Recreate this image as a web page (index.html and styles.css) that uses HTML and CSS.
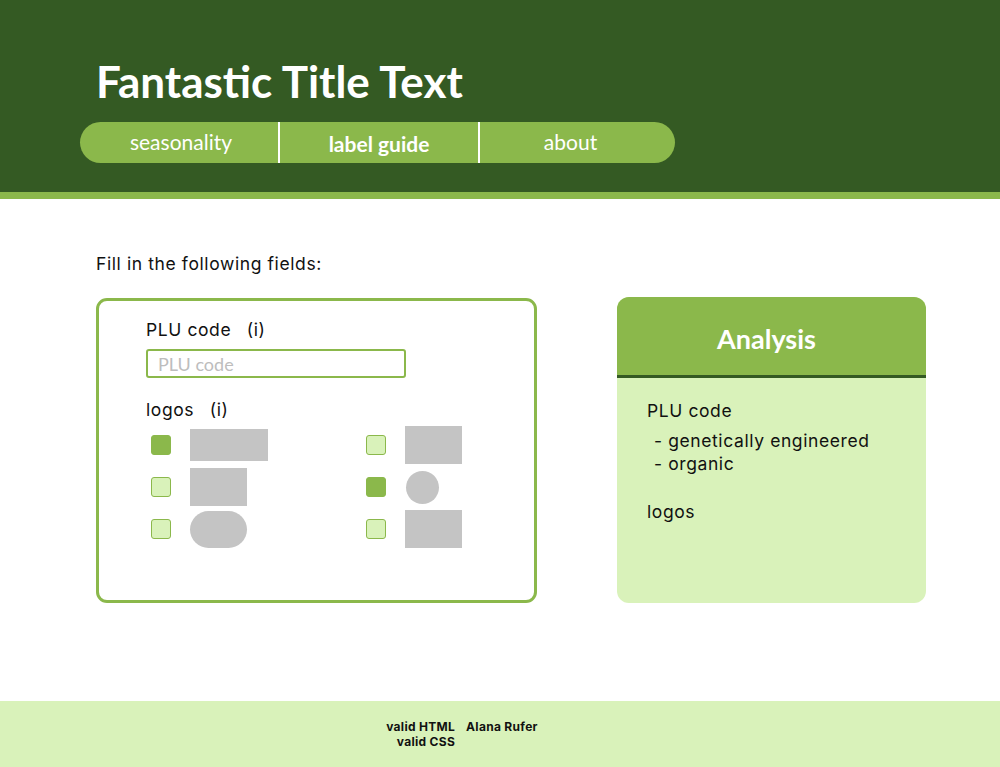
FILE: index.html
```html
<!DOCTYPE html>
<html lang="en">
<head>
<meta charset="utf-8">
<title>Fantastic Title Text</title>
<link rel="stylesheet" href="styles.css">
</head>
<body>
<header class="site-header">
  <h1 class="title">Fantastic Title Text</h1>
  <nav class="nav">
    <a class="nav-item">seasonality</a>
    <a class="nav-item active">label guide</a>
    <a class="nav-item">about</a>
  </nav>
</header>
<main class="main">
  <p class="intro">Fill in the following fields:</p>
  <div class="columns">
    <form class="form-box">
      <label class="field-label">PLU code <span class="info">(i)</span></label>
      <input class="text-input" type="text" placeholder="PLU code">
      <div class="field-label logos-label">logos <span class="info">(i)</span></div>
      <div class="logo-grid">
        <div class="logo-col">
          <div class="logo-row"><span class="check on"></span><span class="shape s-wide"></span></div>
          <div class="logo-row"><span class="check"></span><span class="shape s-sq"></span></div>
          <div class="logo-row"><span class="check"></span><span class="shape s-pill"></span></div>
        </div>
        <div class="logo-col right">
          <div class="logo-row"><span class="check"></span><span class="shape s-sq2"></span></div>
          <div class="logo-row"><span class="check on"></span><span class="shape s-circle"></span></div>
          <div class="logo-row"><span class="check"></span><span class="shape s-sq2"></span></div>
        </div>
      </div>
    </form>
    <section class="analysis">
      <h2 class="analysis-title">Analysis</h2>
      <div class="analysis-body">
        <p class="a-head">PLU code</p>
        <p class="a-item">- genetically engineered</p>
        <p class="a-item">- organic</p>
        <p class="a-head logos-head">logos</p>
      </div>
    </section>
  </div>
</main>
<footer class="footer">
  <div class="foot-left">
    <span>valid HTML</span>
    <span>valid CSS</span>
  </div>
  <div class="foot-right">Alana Rufer</div>
</footer>
</body>
</html>
```
FILE: styles.css
```css
* { box-sizing: border-box; }
html, body { margin: 0; padding: 0; }
body {
  width: 1000px;
  height: 767px;
  background: #ffffff;
  font-family: "Inter", "Noto Sans", sans-serif;
  color: #111;
  display: flex;
  flex-direction: column;
  overflow: hidden;
}
.site-header {
  background: #345a23;
  border-bottom: 7px solid #8bb84b;
  height: 199px;
  padding: 56px 0 0 80px;
}
.title {
  margin: 0 0 0 16px;
  font-family: "Lato", sans-serif;
  font-weight: 700;
  font-size: 44px;
  line-height: 50px;
  color: #ffffff;
}
.nav {
  margin-top: 16px;
  width: 595px;
  height: 41px;
  background: #8bb84b;
  border-radius: 21px;
  display: flex;
}
.nav-item {
  flex: 0 0 auto;
  width: 198px;
  display: flex;
  align-items: center;
  justify-content: center;
  font-family: "Lato", sans-serif;
  font-size: 21px;
  color: #fff;
  padding-bottom: 2px;
}
.nav-item:nth-child(1) { padding-left: 4px; }
.nav-item:nth-child(2) { width: 202px; border-left: 2px solid #fff; border-right: 2px solid #fff; padding-top: 4px; }
.nav-item:nth-child(3) { width: 195px; padding-right: 14px; }
.nav-item.active { font-weight: 700; }
.main {
  flex: 1;
  padding: 54px 0 0 96px;
}
.intro, .field-label, .analysis-body p {
  font-size: 17.5px;
  letter-spacing: 0.6px;
}
.intro {
  margin: 0;
  line-height: 22px;
}
.columns {
  display: flex;
  gap: 81px;
  margin-top: 22px;
}
.form-box {
  width: 441px;
  height: 305px;
  border: 3px solid #8bb84b;
  border-radius: 11px;
  padding: 18px 0 0 47px;
  margin-top: 1px;
}
.field-label {
  display: block;
  line-height: 22px;
}
.info { margin-left: 10px; }
.text-input {
  display: block;
  margin-top: 8px;
  width: 260px;
  height: 29px;
  border: 2px solid #8bb84b;
  border-radius: 3px;
  padding: 0 10px;
  font-family: "Lato", sans-serif;
  font-size: 18px;
  color: #111;
  background: #fff;
}
.text-input::placeholder { color: #bdbdbd; }
.logos-label { margin-top: 21px; }
.logo-grid {
  display: flex;
  margin-top: 3px;
}
.logo-col {
  flex: 0 0 auto;
  width: 215px;
  display: flex;
  flex-direction: column;
}
.logo-row {
  display: flex;
  align-items: center;
  height: 42px;
}
.check {
  width: 20px;
  height: 20px;
  margin-left: 5px;
  border: 1.5px solid #8bb84b;
  border-radius: 3px;
  background: #d9f2ba;
}
.check.on { background: #8bb84b; }
.shape { background: #c4c4c4; margin-left: 19px; }
.s-wide { width: 78px; height: 32px; }
.s-sq { width: 57px; height: 38px; }
.s-pill { width: 57px; height: 37px; border-radius: 19px; }
.s-sq2 { width: 57px; height: 38px; }
.s-circle { width: 33px; height: 33px; border-radius: 50%; margin-left: 20px; }
.analysis {
  width: 309px;
  height: 306px;
  border-radius: 12px;
  overflow: hidden;
  background: #d9f2ba;
  margin-left: -1px;
}
.analysis-title {
  margin: 0;
  height: 81px;
  background: #8bb84b;
  border-bottom: 3px solid #345a23;
  color: #fff;
  font-family: "Lato", sans-serif;
  font-weight: 700;
  font-size: 27px;
  text-align: center;
  padding-top: 24px;
  padding-right: 10px;
  line-height: 36px;
}
.analysis-body {
  padding: 21px 0 0 30px;
}
.analysis-body p { margin: 0; line-height: 23px; }
.a-item { padding-left: 7px; }
.a-head + .a-item { margin-top: 7px; }
.logos-head { margin-top: 25px !important; }
.footer {
  height: 66px;
  background: #d9f2ba;
  display: flex;
  justify-content: center;
  padding-top: 18px;
  font-size: 12px;
  letter-spacing: 0.3px;
  font-weight: 700;
  line-height: 15px;
  gap: 11px;
  padding-right: 76px;
}
.foot-left {
  display: flex;
  flex-direction: column;
  align-items: flex-end;
}
```
